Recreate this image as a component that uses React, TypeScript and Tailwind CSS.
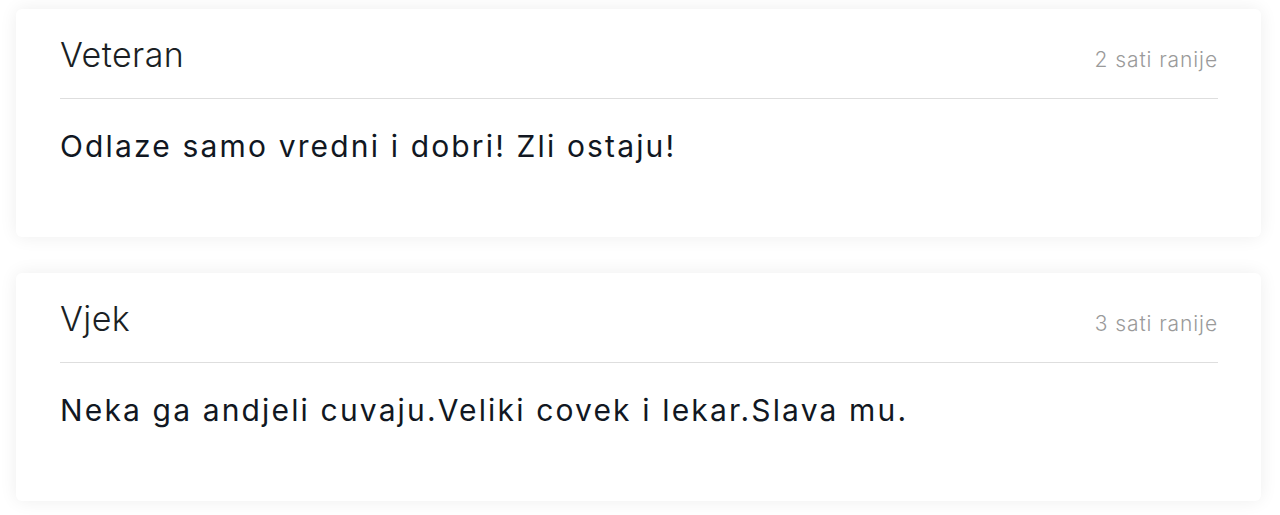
import React from 'react';

type Comment = { author: string; time: string; text: string };

const comments: Comment[] = [
  { author: 'Veteran', time: '2 sati ranije', text: 'Odlaze samo vredni i dobri! Zli ostaju!' },
  { author: 'Vjek', time: '3 sati ranije', text: 'Neka ga andjeli cuvaju.Veliki covek i lekar.Slava mu.' },
];

const CommentCard: React.FC<{ comment: Comment }> = ({ comment }) => (
  <div className="bg-white rounded-md shadow-[0_0_18px_rgba(0,0,0,0.07)] pl-[44px] pr-[43px] h-[228px]">
    <div className="flex items-baseline justify-between border-b border-[#dedede] h-[90px] pt-[29px]">
      <span className="text-[34px] font-light text-[#1b1f24] leading-none tracking-[0.4px]">
        {comment.author}
      </span>
      <span className="text-[21px] font-light text-[#9a9a9a] leading-none tracking-[0.9px]">
        {comment.time}
      </span>
    </div>
    <p className="mt-[27px] text-[30px] font-normal text-[#111722] leading-[40px] tracking-[2.15px]">
      {comment.text}
    </p>
  </div>
);

export default function App() {
  return (
    <div
      className="min-h-[515px] bg-white pl-[16px] pr-[19px] pt-[9px] flex flex-col gap-[36px]"
      style={{ fontFamily: 'Inter, "Noto Sans", sans-serif' }}
    >
      {comments.map((c, i) => (
        <CommentCard key={i} comment={c} />
      ))}
    </div>
  );
}
